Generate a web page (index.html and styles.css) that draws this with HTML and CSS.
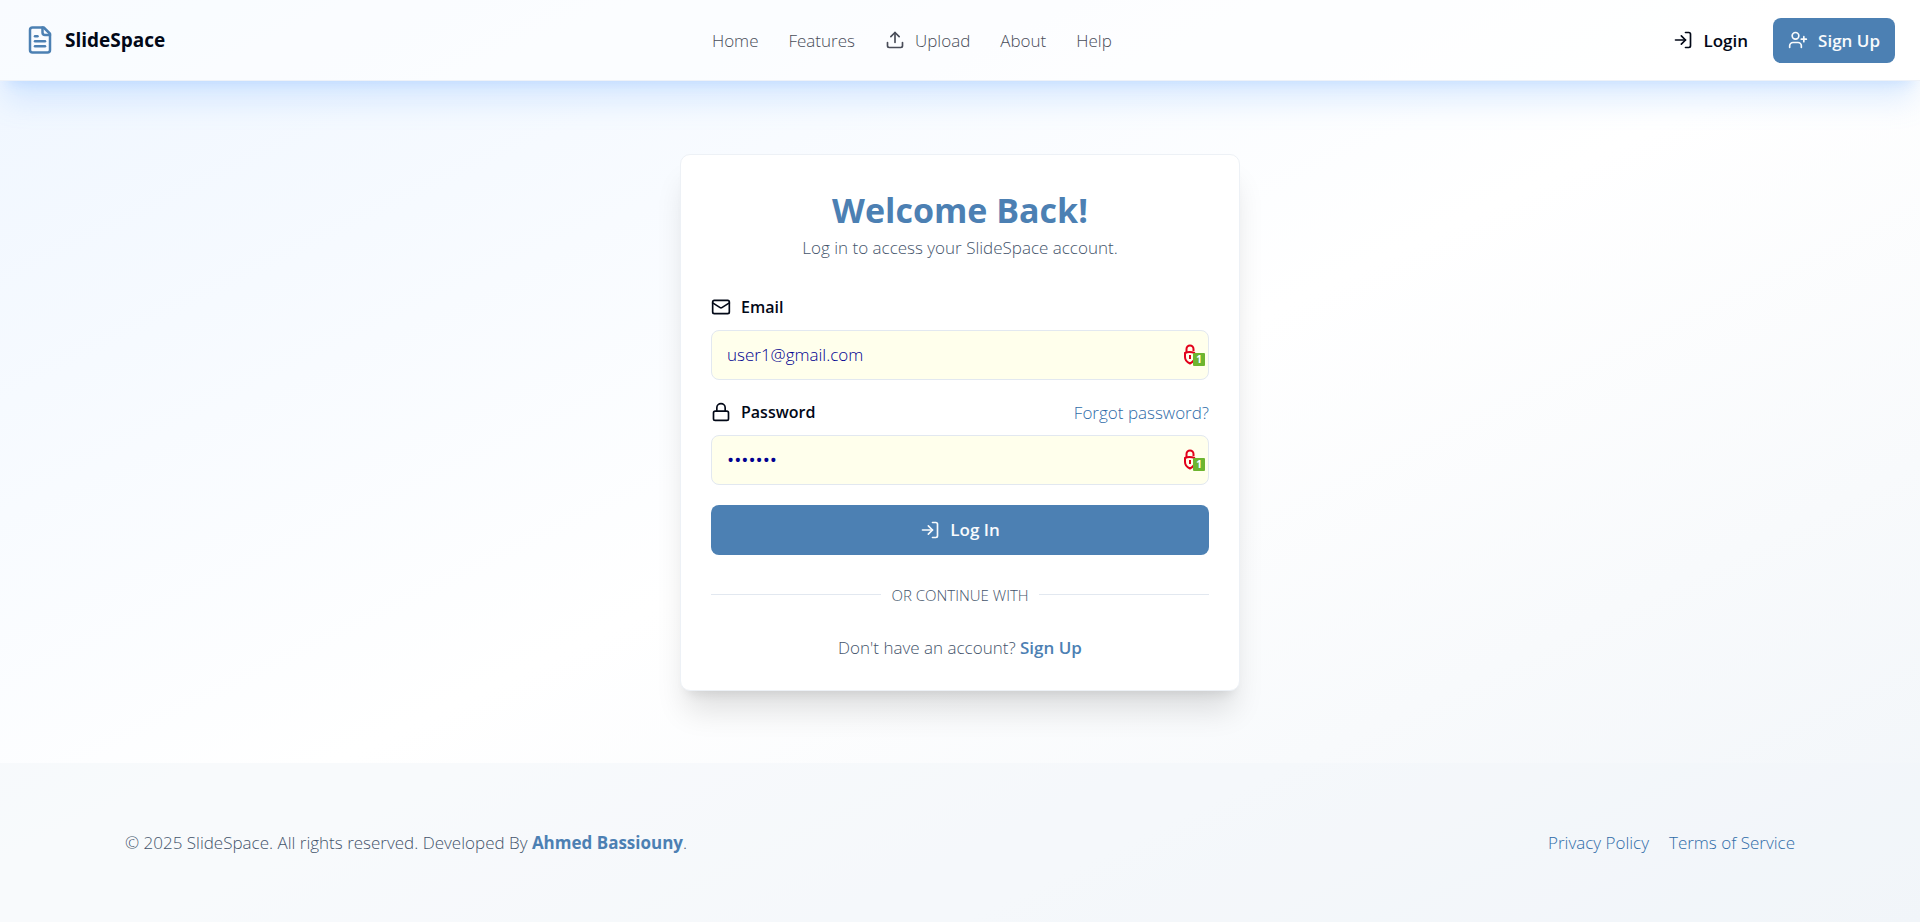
FILE: index.html
```html
<!DOCTYPE html>
<html lang="en">
<head>
<meta charset="utf-8">
<meta name="viewport" content="width=device-width, initial-scale=1">
<title>SlideSpace - Log In</title>
<link rel="stylesheet" href="styles.css">
</head>
<body>
<header class="site-header">
  <a class="brand" href="#">
    <svg class="icon icon-lg" viewBox="0 0 24 24" aria-hidden="true"><path d="M15 2H6a2 2 0 0 0-2 2v16a2 2 0 0 0 2 2h12a2 2 0 0 0 2-2V7Z"/><path d="M14 2v4a2 2 0 0 0 2 2h4"/><path d="M10 9H8"/><path d="M16 13H8"/><path d="M16 17H8"/></svg>
    <span>SlideSpace</span>
  </a>
  <nav class="nav" aria-label="Main">
    <a href="#">Home</a>
    <a href="#">Features</a>
    <a class="with-icon" href="#">
      <svg class="icon" viewBox="0 0 24 24" aria-hidden="true"><path d="M21 15v4a2 2 0 0 1-2 2H5a2 2 0 0 1-2-2v-4"/><path d="m17 8-5-5-5 5"/><path d="M12 3v12"/></svg>
      Upload
    </a>
    <a href="#">About</a>
    <a href="#">Help</a>
  </nav>
  <div class="actions">
    <a class="button button-ghost" href="#">
      <svg class="icon" viewBox="0 0 24 24" aria-hidden="true"><path d="M15 3h4a2 2 0 0 1 2 2v14a2 2 0 0 1-2 2h-4"/><path d="m10 17 5-5-5-5"/><path d="M15 12H3"/></svg>
      Login
    </a>
    <a class="button button-primary" href="#">
      <svg class="icon" viewBox="0 0 24 24" aria-hidden="true"><path d="M16 21v-2a4 4 0 0 0-4-4H6a4 4 0 0 0-4 4v2"/><circle cx="9" cy="7" r="4"/><path d="M19 8v6"/><path d="M22 11h-6"/></svg>
      Sign Up
    </a>
  </div>
</header>

<main class="main">
  <section class="card">
    <div class="card-head">
      <h1>Welcome Back!</h1>
      <p>Log in to access your SlideSpace account.</p>
    </div>
    <form class="form">
      <div class="field">
        <div class="field-head">
          <label for="email">
            <svg class="icon" viewBox="0 0 24 24" aria-hidden="true"><rect width="20" height="16" x="2" y="4" rx="2"/><path d="m22 7-8.97 5.7a1.94 1.94 0 0 1-2.06 0L2 7"/></svg>
            Email
          </label>
        </div>
        <div class="input-wrap">
          <input id="email" type="email" value="user1@gmail.com">
          <span class="vault">
            <svg viewBox="0 0 14 21" aria-hidden="true"><path d="M3.500 8V5a3.500 3.500 0 0 1 7 0v2"/><path d="M12 9Q6 7 2 9v4c0 3 1.500 5 5 6.500 2-1 3-2 4-3.500"/><path d="M7 11v4"/></svg>
            <span class="vault-count">1</span>
          </span>
        </div>
      </div>
      <div class="field">
        <div class="field-head">
          <label for="password">
            <svg class="icon" viewBox="0 0 24 24" aria-hidden="true"><rect width="18" height="11" x="3" y="11" rx="2"/><path d="M7 11V7a5 5 0 0 1 10 0v4"/></svg>
            Password
          </label>
          <a class="link" href="#">Forgot password?</a>
        </div>
        <div class="input-wrap">
          <input id="password" type="password" value="secret1">
          <span class="vault">
            <svg viewBox="0 0 14 21" aria-hidden="true"><path d="M3.500 8V5a3.500 3.500 0 0 1 7 0v2"/><path d="M12 9Q6 7 2 9v4c0 3 1.500 5 5 6.500 2-1 3-2 4-3.500"/><path d="M7 11v4"/></svg>
            <span class="vault-count">1</span>
          </span>
        </div>
      </div>
      <button class="button button-primary button-wide" type="submit">
        <svg class="icon" viewBox="0 0 24 24" aria-hidden="true"><path d="M15 3h4a2 2 0 0 1 2 2v14a2 2 0 0 1-2 2h-4"/><path d="m10 17 5-5-5-5"/><path d="M15 12H3"/></svg>
        Log In
      </button>
    </form>
    <div class="divider"><span>OR CONTINUE WITH</span></div>
    <p class="signup">Don't have an account? <a href="#">Sign Up</a></p>
  </section>
</main>

<footer class="footer">
  <div class="footer-inner">
    <p>© 2025 SlideSpace. All rights reserved. Developed By <a class="author" href="#">Ahmed Bassiouny</a>.</p>
    <nav class="footer-links" aria-label="Legal">
      <a class="link" href="#">Privacy Policy</a>
      <a class="link" href="#">Terms of Service</a>
    </nav>
  </div>
</footer>
</body>
</html>
```
FILE: styles.css
```css
:root {
  --primary: #4c80b3;
  --link: #2f6ca8;
  --ink: #020817;
  --muted: #44546b;
  --line: #e2e8f0;
}

* {
  box-sizing: border-box;
}

body {
  margin: 0;
  min-height: 100vh;
  display: flex;
  flex-direction: column;
  background: linear-gradient(to bottom right, #eff6ff, #ffffff 50%, #f1f5f9);
  color: var(--ink);
  font-family: "Open Sans", "Noto Sans", sans-serif;
  font-size: 17px;
  font-weight: 300;
  line-height: 25px;
}

h1,
p {
  margin: 0;
}

a {
  color: inherit;
  text-decoration: none;
}

.icon {
  width: 20px;
  height: 20px;
  flex: none;
  fill: none;
  stroke: currentColor;
  stroke-width: 2;
  stroke-linecap: round;
  stroke-linejoin: round;
}

.icon-lg {
  width: 30px;
  height: 30px;
  color: var(--primary);
}

.site-header {
  display: flex;
  align-items: center;
  justify-content: space-between;
  min-height: 81px;
  padding: 0 25px;
  background: rgba(255, 255, 255, 0.6);
  border-bottom: 1px solid #eef2f8;
  box-shadow: 0 25px 31px -6px rgba(96, 165, 255, 0.2), 0 10px 12px -8px rgba(96, 165, 255, 0.2);
}

.brand {
  display: flex;
  align-items: center;
  gap: 10px;
  font-size: 19px;
  font-weight: 700;
}

.nav {
  display: flex;
  align-items: center;
  gap: 30px;
  color: #484c58;
}

.with-icon {
  display: flex;
  align-items: center;
  gap: 10px;
}

.actions {
  display: flex;
  gap: 10px;
}

.button {
  display: flex;
  align-items: center;
  justify-content: center;
  gap: 10px;
  height: 45px;
  padding: 0 15px;
  border: 0;
  border-radius: 8px;
  font: inherit;
  font-weight: 600;
}

.button-primary {
  background: var(--primary);
  color: #f8fafc;
}

.button-wide {
  width: 100%;
  height: 50px;
}

.main {
  flex: 1;
  display: flex;
  align-items: center;
  justify-content: center;
  padding: 60px 20px;
}

.card {
  width: 100%;
  max-width: 560px;
  padding: 30px;
  background: #ffffff;
  border: 1px solid #edf1f6;
  border-radius: 10px;
  box-shadow: 0 25px 31px -6px rgba(0, 0, 0, 0.12), 0 10px 12px -8px rgba(0, 0, 0, 0.1);
}

.card-head {
  text-align: center;
  color: var(--muted);
}

.card-head h1 {
  color: var(--primary);
  font-size: 34px;
  font-weight: 700;
  line-height: 50px;
}

.form {
  display: grid;
  gap: 20px;
  margin-top: 35px;
}

.field {
  display: grid;
  gap: 10px;
}

.field-head {
  display: flex;
  align-items: center;
  justify-content: space-between;
}

.field-head label {
  display: flex;
  align-items: center;
  gap: 10px;
  font-size: 16px;
  font-weight: 600;
}

.link {
  color: var(--link);
}

.input-wrap {
  position: relative;
}

.input-wrap input {
  display: block;
  width: 100%;
  height: 50px;
  padding: 0 40px 0 15px;
  border: 1px solid var(--line);
  border-radius: 8px;
  background: #ffffec;
  color: #000090;
  font: inherit;
}

.input-wrap input[type="password"] {
  font-size: 19px;
  font-weight: 400;
}

.vault {
  position: absolute;
  top: 14px;
  right: 4px;
  width: 22px;
  height: 22px;
}

.vault svg {
  display: block;
  width: 14px;
  height: 21px;
  fill: none;
  stroke: #e2001a;
  stroke-width: 2;
}

.vault-count {
  position: absolute;
  right: 0;
  bottom: 0;
  width: 12px;
  height: 13px;
  border-radius: 1px;
  background: #6db52f;
  color: #ffffff;
  font-size: 10px;
  font-weight: 700;
  line-height: 13px;
  text-align: center;
}

.divider {
  display: flex;
  align-items: center;
  gap: 10px;
  margin-top: 30px;
  color: var(--muted);
  font-size: 15px;
  line-height: 20px;
}

.divider::before,
.divider::after {
  content: "";
  flex: 1;
  height: 1px;
  background: var(--line);
}

.signup {
  margin-top: 30px;
  color: var(--muted);
  text-align: center;
}

.signup a {
  color: var(--primary);
  font-weight: 600;
}

.footer {
  padding: 60px 20px;
  background: rgba(241, 245, 249, 0.5);
}

.footer-inner {
  display: flex;
  flex-wrap: wrap;
  align-items: center;
  justify-content: space-between;
  gap: 20px;
  max-width: 1670px;
  min-height: 39px;
  margin: 0 auto;
  color: var(--muted);
}

.footer .author {
  color: var(--primary);
  font-weight: 700;
}

.footer-links {
  display: flex;
  gap: 20px;
}
```
